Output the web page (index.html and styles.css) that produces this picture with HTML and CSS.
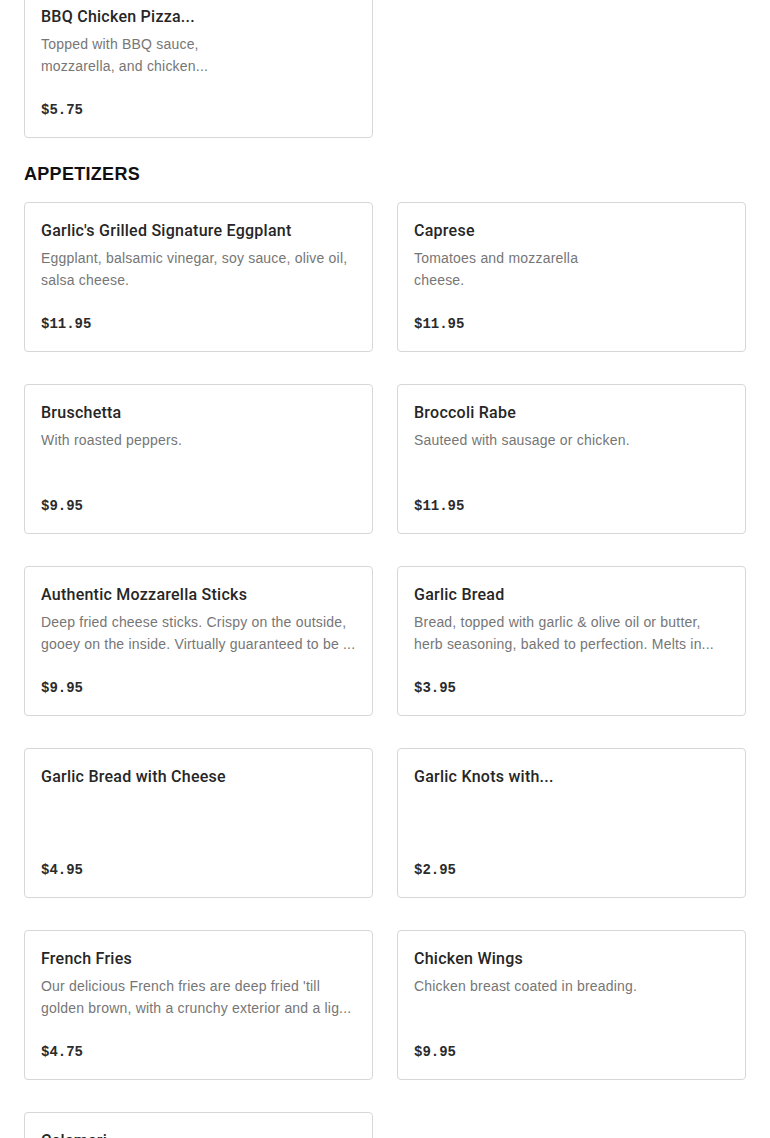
FILE: index.html
```html
<!DOCTYPE html>
<html lang="en">
<head>
<meta charset="utf-8">
<title>Menu</title>
<link rel="stylesheet" href="styles.css">
</head>
<body>
<main class="menu">
  <section class="section first">
    <div class="grid">
      <div class="card">
        <div class="title">BBQ Chicken Pizza...</div>
        <div class="desc narrow">Topped with BBQ sauce, mozzarella, and chicken...</div>
        <div class="price">$5.75</div>
      </div>
    </div>
  </section>

  <section class="section">
    <h2 class="heading">APPETIZERS</h2>
    <div class="grid">
      <div class="card">
        <div class="title">Garlic's Grilled Signature Eggplant</div>
        <div class="desc">Eggplant, balsamic vinegar, soy sauce, olive oil, salsa cheese.</div>
        <div class="price">$11.95</div>
      </div>
      <div class="card">
        <div class="title">Caprese</div>
        <div class="desc narrow">Tomatoes and mozzarella cheese.</div>
        <div class="price">$11.95</div>
      </div>
      <div class="card">
        <div class="title">Bruschetta</div>
        <div class="desc">With roasted peppers.</div>
        <div class="price">$9.95</div>
      </div>
      <div class="card">
        <div class="title">Broccoli Rabe</div>
        <div class="desc">Sauteed with sausage or chicken.</div>
        <div class="price">$11.95</div>
      </div>
      <div class="card">
        <div class="title">Authentic Mozzarella Sticks</div>
        <div class="desc">Deep fried cheese sticks. Crispy on the outside, gooey on the inside. Virtually guaranteed to be ...</div>
        <div class="price">$9.95</div>
      </div>
      <div class="card">
        <div class="title">Garlic Bread</div>
        <div class="desc">Bread, topped with garlic &amp; olive oil or butter, herb seasoning, baked to perfection. Melts in...</div>
        <div class="price">$3.95</div>
      </div>
      <div class="card">
        <div class="title">Garlic Bread with Cheese</div>
        <div class="desc"></div>
        <div class="price">$4.95</div>
      </div>
      <div class="card">
        <div class="title">Garlic Knots with...</div>
        <div class="desc"></div>
        <div class="price">$2.95</div>
      </div>
      <div class="card">
        <div class="title">French Fries</div>
        <div class="desc">Our delicious French fries are deep fried 'till golden brown, with a crunchy exterior and a lig...</div>
        <div class="price">$4.75</div>
      </div>
      <div class="card">
        <div class="title">Chicken Wings</div>
        <div class="desc">Chicken breast coated in breading.</div>
        <div class="price">$9.95</div>
      </div>
      <div class="card">
        <div class="title">Calamari</div>
        <div class="desc">Fried calamari served with marinara sauce.</div>
        <div class="price">$12.95</div>
      </div>
    </div>
  </section>
</main>
</body>
</html>
```

FILE: styles.css
```css
* { box-sizing: border-box; }

html, body {
  margin: 0;
  padding: 0;
  background: #ffffff;
}

body {
  font-family: "Liberation Sans", Arial, sans-serif;
  color: #2d2d2d;
}

.menu {
  padding: 0 24px;
  margin-top: -12px;
}

.section + .section {
  margin-top: 25px;
}

.heading {
  margin: 0 0 17px;
  font-family: "Liberation Sans", Arial, sans-serif;
  font-size: 18px;
  line-height: 22px;
  font-weight: 900;
  letter-spacing: 0.3px;
  color: #111111;
}

.grid {
  display: grid;
  grid-template-columns: 1fr 1fr;
  column-gap: 24px;
  row-gap: 32px;
}

.card {
  display: flex;
  flex-direction: column;
  height: 150px;
  padding: 16px 16px 15px;
  border: 1px solid #d7d7d7;
  border-radius: 4px;
  background: #fff;
}

.title {
  font-family: Roboto, "Liberation Sans", Arial, sans-serif;
  font-size: 16px;
  line-height: 24px;
  font-weight: 500;
  letter-spacing: 0.25px;
  color: #262626;
  white-space: nowrap;
  overflow: hidden;
}

.desc {
  margin-top: 4px;
  font-size: 14px;
  line-height: 22px;
  letter-spacing: 0.2px;
  color: #767676;
  display: -webkit-box;
  -webkit-line-clamp: 2;
  -webkit-box-orient: vertical;
  overflow: hidden;
}

.desc.narrow {
  max-width: 190px;
}

.price {
  margin-top: auto;
  font-family: "Liberation Mono", "Courier New", monospace;
  font-size: 14px;
  line-height: 24px;
  font-weight: 700;
  color: #2b2b2b;
}
```
